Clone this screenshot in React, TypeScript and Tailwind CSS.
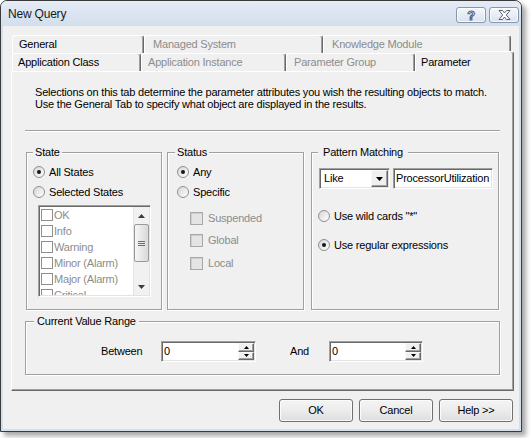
import React from "react";

const SUNKEN =
  "border border-t-[#a0a0a0] border-l-[#a0a0a0] border-b-white border-r-white shadow-[inset_1px_1px_0_#696969,inset_-1px_-1px_0_#e3e3e3]";
const RAISED =
  "border border-t-[#f8f8f8] border-l-[#f8f8f8] border-r-[#696969] border-b-[#696969] shadow-[inset_-1px_-1px_0_#a0a0a0] bg-[#f0f0f0]";

function Radio({ checked }: { checked?: boolean }) {
  return (
    <span className="w-[12px] h-[12px] rounded-full border border-[#909090] bg-gradient-to-br from-[#d6d6d6] to-[#ffffff] flex items-center justify-center shrink-0">
      {checked && <span className="w-[4px] h-[4px] rounded-full bg-[#151515]" />}
    </span>
  );
}

function RadioRow({ checked, label, className = "" }: { checked?: boolean; label: string; className?: string }) {
  return (
    <div className={`flex items-center h-[14px] gap-[4px] ${className}`}>
      <Radio checked={checked} />
      <span className="whitespace-nowrap">{label}</span>
    </div>
  );
}

function DisabledCheck({ label, className = "" }: { label: string; className?: string }) {
  return (
    <div className={`flex items-center h-[14px] gap-[5px] ml-[13px] ${className}`}>
      <span className="w-[13px] h-[13px] border border-[#a8a8a8] bg-[#e4e4e4] shadow-[inset_1px_1px_0_#cfcfcf] shrink-0" />
      <span className="text-[#8c8c8c]">{label}</span>
    </div>
  );
}

function Group({
  className,
  label,
  labelClass,
  children,
}: {
  className: string;
  label: string;
  labelClass: string;
  children?: React.ReactNode;
}) {
  return (
    <div className={`relative border border-[#a0a0a0] shadow-[inset_1px_1px_0_#ffffff,1px_1px_0_#ffffff] shrink-0 ${className}`}>
      <span className={`absolute -top-[7px] bg-[#f0f0f0] leading-[13px] whitespace-nowrap ${labelClass}`}>{label}</span>
      {children}
    </div>
  );
}

function Tab({ className, children, disabled }: { className: string; children: React.ReactNode; disabled?: boolean }) {
  return (
    <div
      className={`h-[18px] shrink-0 border-t border-l border-white border-r border-r-[#696969] shadow-[inset_-1px_0_0_#a0a0a0] rounded-t-[3px] flex items-center whitespace-nowrap ${
        disabled ? "text-[#8c8c8c]" : "text-black"
      } ${className}`}
    >
      {children}
    </div>
  );
}

function Down({ fill = "#000" }: { fill?: string }) {
  return (
    <svg width="7" height="4" viewBox="0 0 7 4">
      <polygon points="0,0 7,0 3.5,4" fill={fill} />
    </svg>
  );
}

function Up({ fill = "#000" }: { fill?: string }) {
  return (
    <svg width="7" height="4" viewBox="0 0 7 4">
      <polygon points="0,4 7,4 3.5,0" fill={fill} />
    </svg>
  );
}

function Spin({ className }: { className: string }) {
  return (
    <div className={`h-[21px] bg-white flex p-[1px] ${SUNKEN} ${className}`}>
      <span className="flex-1 pl-[1px] flex items-center">0</span>
      <div className="w-[16px] flex flex-col">
        <div className={`flex-1 flex items-center justify-center ${RAISED}`}>
          <svg width="5" height="3" viewBox="0 0 5 3">
            <polygon points="0,3 5,3 2.5,0" fill="#000" />
          </svg>
        </div>
        <div className={`flex-1 flex items-center justify-center ${RAISED}`}>
          <svg width="5" height="3" viewBox="0 0 5 3">
            <polygon points="0,0 5,0 2.5,3" fill="#000" />
          </svg>
        </div>
      </div>
    </div>
  );
}

function Button({ children }: { children: React.ReactNode }) {
  return (
    <div className="w-[74px] h-[23px] rounded-[3px] border border-[#707070] bg-gradient-to-b from-[#f4f4f4] via-[#ececec] to-[#dedede] shadow-[inset_0_0_0_1px_#fbfbfb] flex items-center justify-center">
      {children}
    </div>
  );
}

export default function App() {
  const items = ["OK", "Info", "Warning", "Minor (Alarm)", "Major (Alarm)", "Critical"];
  return (
    <div className="w-[531px] h-[438px] bg-white font-['Liberation_Sans',Arial,sans-serif] text-[11px] leading-[13px] tracking-[-0.2px] text-black">
      <div className="w-[522px] h-[432px] rounded-t-[7px] border border-[#3a3a3a] bg-[#d3dfed] flex flex-col overflow-hidden shadow-[4px_4px_5px_rgba(0,0,0,0.35)]">
        {/* Title bar */}
        <div className="h-[25px] shrink-0 flex items-start bg-gradient-to-b from-[#e4ebf5] to-[#d3dfed]">
          <span className="ml-[7px] mt-[6px] text-[12px] leading-[15px] text-[#1a1a1a]">New Query</span>
          <div className="ml-auto mr-[2px] mt-[6px] flex gap-[3px]">
            <div className="w-[30px] h-[16px] rounded-[3px] border border-[#8797ad] bg-gradient-to-b from-[#f5f8fc] to-[#d9e2ee] shadow-[inset_0_0_0_1px_rgba(255,255,255,0.7)] flex items-center justify-center">
              <span className="text-[13px] leading-none font-bold text-white [-webkit-text-stroke:1px_#5a6272]">?</span>
            </div>
            <div className="w-[30px] h-[16px] rounded-[3px] border border-[#8797ad] bg-gradient-to-b from-[#f5f8fc] to-[#d9e2ee] shadow-[inset_0_0_0_1px_rgba(255,255,255,0.7)] flex items-center justify-center">
              <svg width="13" height="10" viewBox="0 0 13 10">
                <polygon
                  points="1,0.5 4.5,0.5 6.5,3 8.5,0.5 12,0.5 8.3,5 12,9.5 8.5,9.5 6.5,7 4.5,9.5 1,9.5 4.7,5"
                  fill="#ffffff"
                  stroke="#5a6272"
                  strokeWidth="1"
                />
              </svg>
            </div>
          </div>
        </div>

        {/* Client */}
        <div className="flex-1 mx-[2px] mb-[2px] bg-[#f0f0f0] pl-[8px] pt-[9px] flex flex-col">
          {/* Tabs row 1 */}
          <div className="flex ml-[1px] h-[18px]">
            <Tab className="w-[132px] pl-[6px]">General</Tab>
            <Tab className="w-[179px] pl-[8px]" disabled>
              Managed System
            </Tab>
            <Tab className="w-[188px] pl-[8px]" disabled>
              Knowledge Module
            </Tab>
          </div>
          {/* Tabs row 2 */}
          <div className="flex ml-[1px] h-[18px] items-start">
            <Tab className="w-[129px] pl-[5px]">Application Class</Tab>
            <Tab className="w-[145px] pl-[6px]" disabled>
              Application Instance
            </Tab>
            <Tab className="w-[129px] pl-[7px]" disabled>
              Parameter Group
            </Tab>
            <div className="relative z-10 -mt-[2px] -mb-[1px] h-[21px] w-[99px] shrink-0 bg-[#f0f0f0] border-t border-l border-white border-r border-r-[#696969] shadow-[inset_-1px_0_0_#a0a0a0] rounded-t-[3px] flex items-center pl-[5px] pt-[1px]">
              Parameter
            </div>
          </div>

          {/* Panel */}
          <div className="w-[503px] h-[320px] shrink-0 border-t border-l border-white border-r border-b border-r-[#696969] border-b-[#696969] shadow-[inset_-1px_-1px_0_#a0a0a0] pl-[13px] pt-[14px] flex flex-col">
            <div className="pl-[10px] leading-[12px] whitespace-nowrap">
              <p>Selections on this tab determine the parameter attributes you wish the resulting objects to match.</p>
              <p>Use the General Tab to specify what object are displayed in the results.</p>
            </div>
            <div className="mt-[20px] w-[475px] h-[2px] border-t border-[#a0a0a0] border-b border-b-white" />

            <div className="mt-[20px] flex h-[158px]">
              {/* State */}
              <Group
                className="ml-[1px] w-[136px] h-[158px] flex flex-col pl-[6px] pt-[12px]"
                label="State"
                labelClass="left-[6px] px-[2px]"
              >
                <RadioRow checked label="All States" />
                <RadioRow className="mt-[6px]" label="Selected States" />
                <div className={`mt-[6px] ml-[5px] w-[113px] h-[92px] bg-white flex p-[1px] ${SUNKEN}`}>
                  <div className="flex-1 overflow-hidden flex flex-col">
                    {items.map((it) => (
                      <div key={it} className="h-[16px] shrink-0 flex items-center gap-[1px] pl-[1px] text-[#8c8c8c] whitespace-nowrap">
                        <span className="w-[12px] h-[12px] border border-[#8e8e8e] bg-white shrink-0" />
                        <span>{it}</span>
                      </div>
                    ))}
                  </div>
                  <div className="w-[16px] flex flex-col bg-[#f1f1f1] border-l border-[#e4e4e4]">
                    <div className="h-[17px] flex items-center justify-center">
                      <Up fill="#3c3c3c" />
                    </div>
                    <div className="h-[38px] rounded-[2px] border border-[#9a9a9a] bg-gradient-to-r from-[#f6f6f6] to-[#d9d9d9] flex flex-col items-center justify-center gap-[1px]">
                      <span className="w-[7px] h-[1px] bg-[#6e6e6e]" />
                      <span className="w-[7px] h-[1px] bg-[#6e6e6e]" />
                      <span className="w-[7px] h-[1px] bg-[#6e6e6e]" />
                    </div>
                    <div className="flex-1" />
                    <div className="h-[17px] flex items-center justify-center">
                      <Down fill="#3c3c3c" />
                    </div>
                  </div>
                </div>
              </Group>

              {/* Status */}
              <Group
                className="ml-[5px] w-[137px] h-[158px] flex flex-col pl-[9px] pt-[12px]"
                label="Status"
                labelClass="left-[7px] px-[2px]"
              >
                <RadioRow checked label="Any" />
                <RadioRow className="mt-[6px]" label="Specific" />
                <DisabledCheck className="mt-[12px]" label="Suspended" />
                <DisabledCheck className="mt-[8px]" label="Global" />
                <DisabledCheck className="mt-[9px]" label="Local" />
              </Group>

              {/* Pattern Matching */}
              <Group
                className="ml-[7px] w-[188px] h-[158px] flex flex-col pl-[6px] pt-[15px]"
                label="Pattern Matching"
                labelClass="left-[6px] px-[5px]"
              >
                <div className="flex ml-[1px] h-[21px]">
                  <div className={`w-[71px] h-[21px] bg-white flex p-[1px] ${SUNKEN}`}>
                    <span className="flex-1 pl-[3px] flex items-center">Like</span>
                    <div className={`w-[17px] flex items-center justify-center ${RAISED}`}>
                      <Down />
                    </div>
                  </div>
                  <div className={`ml-[3px] w-[100px] h-[21px] bg-white pl-[2px] flex items-center whitespace-nowrap overflow-hidden ${SUNKEN}`}>
                    ProcessorUtilization
                  </div>
                </div>
                <RadioRow className="mt-[20px]" label={'Use wild cards "*"'} />
                <RadioRow className="mt-[15px]" checked label="Use regular expressions" />
              </Group>
            </div>

            {/* Current Value Range */}
            <Group
              className="mt-[11px] w-[475px] h-[54px] flex items-start pt-[19px]"
              label="Current Value Range"
              labelClass="left-[8px] px-[3px]"
            >
              <span className="ml-[75px] w-[60px] h-[21px] flex items-center shrink-0">Between</span>
              <Spin className="w-[95px] shrink-0" />
              <span className="ml-[34px] w-[39px] h-[21px] flex items-center shrink-0">And</span>
              <Spin className="w-[94px] shrink-0" />
            </Group>
          </div>

          {/* Buttons */}
          <div className="mt-[8px] w-[503px] flex justify-end gap-[6px] pr-[1px]">
            <Button>OK</Button>
            <Button>Cancel</Button>
            <Button>Help &gt;&gt;</Button>
          </div>
        </div>
      </div>
    </div>
  );
}
